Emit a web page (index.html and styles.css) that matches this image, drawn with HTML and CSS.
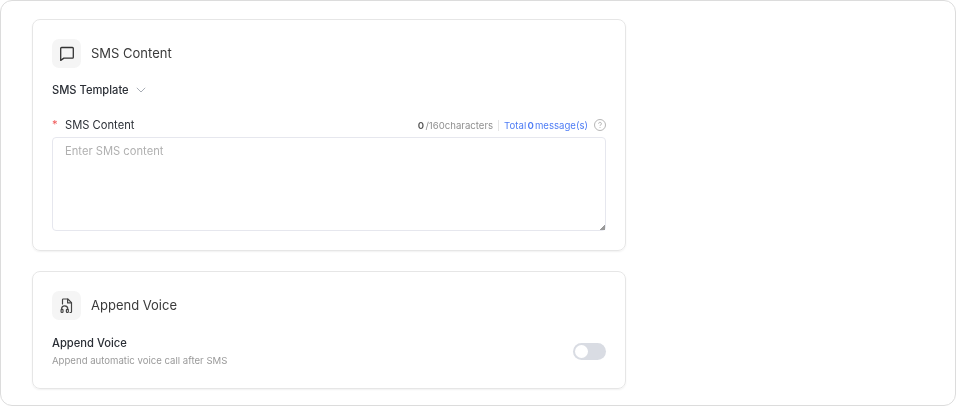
FILE: index.html
```html
<!DOCTYPE html>
<html lang="en">
<head>
<meta charset="utf-8">
<title>SMS Content</title>
<link rel="stylesheet" href="styles.css">
</head>
<body>
<main class="frame">
  <section class="card">
    <header class="card-head">
      <span class="icon-box">
        <svg width="16" height="16" viewBox="0 0 16 16" fill="none" stroke="#333" stroke-width="1.3" stroke-linejoin="round"><path d="M1.700 2.400a.9.9 0 0 1 .9-.9h10.800a.9.9 0 0 1 .9.9v8.800a.9.9 0 0 1-.9.9H4.900l-3.200 2.300z"/></svg>
      </span>
      <h2 class="card-title">SMS Content</h2>
    </header>
    <div class="template">
      <span>SMS Template</span>
      <svg width="10" height="6" viewBox="0 0 10 6" fill="none" stroke="#a8adb5" stroke-width="1"><path d="M.8.8 5 5l4.200-4.200"/></svg>
    </div>
    <div class="field-head">
      <label class="field-label"><span class="req">*</span>SMS Content</label>
      <div class="counter">
        <span class="count"><b>0</b> /160characters</span>
        <span class="sep"></span>
        <span class="total">Total <b>0</b> message(s)</span>
        <svg width="12" height="12" viewBox="0 0 12 12" fill="none" stroke="#a3a3a3" stroke-width=".8"><circle cx="6" cy="6" r="5.500"/><path d="M4.600 4.700a1.400 1.400 0 1 1 2.100 1.200c-.5.3-.7.6-.7 1.100"/><path d="M6 8.200v.8"/></svg>
      </div>
    </div>
    <textarea class="input" placeholder="Enter SMS content"></textarea>
  </section>
  <section class="card card-voice">
    <header class="card-head">
      <span class="icon-box">
        <svg width="16" height="16" viewBox="0 0 16 16" fill="none" stroke="#444" stroke-width="1.200" stroke-linejoin="round" stroke-linecap="round"><path d="M3.500 6V1.800a.8.8 0 0 1 .8-.8h4.500l3.700 3.700v9a.8.8 0 0 1-.8.8h-.7"/><path d="M8.600 1v3.900h3.900"/><path d="M2.600 11.500v-.5a3.100 3.100 0 0 1 6.200 0v.5"/><rect x="2.100" y="11.300" width="1.900" height="3.200" rx=".8"/><rect x="7.400" y="11.300" width="1.900" height="3.200" rx=".8"/></svg>
      </span>
      <h2 class="card-title">Append Voice</h2>
    </header>
    <div class="setting">
      <div>
        <div class="setting-name">Append Voice</div>
        <div class="setting-desc">Append automatic voice call after SMS</div>
      </div>
      <span class="switch"><span class="knob"></span></span>
    </div>
  </section>
</main>
</body>
</html>
```
FILE: styles.css
```css
* { box-sizing: border-box; }
html, body { margin: 0; background: #fff; }
body { font-family: Inter, "Noto Sans", sans-serif; color: #2b2f36; }
.frame {
  width: 956px; height: 406px;
  border: 1px solid #dcdcdc; border-radius: 12px;
  padding: 18px 0 0 31px;
  display: flex; flex-direction: column; gap: 20px;
  overflow: hidden;
  filter: blur(.3px);
}
.card {
  width: 594px;
  border: 1px solid #e6e6e6; border-radius: 8px;
  padding: 19px 19px 19px 19px;
  box-shadow: 0 1px 2px rgba(0,0,0,.06);
}
.card-voice { padding-bottom: 20px; }
.card-head { display: flex; align-items: center; gap: 10px; }
.icon-box {
  width: 29px; height: 29px; border-radius: 7px; background: #f5f5f5;
  display: flex; align-items: center; justify-content: center;
}
.card-title { margin: 0 0 1px; font-size: 13px; font-weight: 400; color: #3a3a3a; }
.template {
  display: flex; align-items: center; gap: 7px;
  margin-top: 14px; height: 16px;
  font-size: 11.150px; font-weight: 500; color: #2b2f36;
}
.field-head {
  display: flex; justify-content: space-between; align-items: center;
  margin-top: 19px; height: 16px;
}
.field-label { font-size: 11.200px; color: #2b2f36; }
.req { color: #f05a5a; display: inline-block; width: 13px; }
.counter { display: flex; align-items: center; font-size: 9.600px; color: #8f8f8f; word-spacing: -1.500px; }
.count b, .total b { font-weight: 600; }
.count b { color: #555; }
.sep { width: 1px; height: 11px; background: #e5e5e5; margin: 0 5px; }
.total { color: #4f7df5; margin-right: 6px; }
.input {
  display: block; width: 100%; height: 94px; margin-top: 4px;
  border: 1px solid #e6e7ee; border-radius: 4px;
  padding: 6px 12px;
  font: 11.200px/1.400 Inter, "Noto Sans", sans-serif;
  outline: none;
}
.input::-webkit-resizer {
  background: linear-gradient(135deg, transparent 80%, #999 80%);
}
.input::placeholder { color: #b0b0b0; }
.setting {
  display: flex; justify-content: space-between; align-items: center;
  margin-top: 15px;
}
.setting-name { font-size: 11.200px; font-weight: 500; line-height: 16px; }
.setting-desc { font-size: 9.600px; color: #9a9a9a; line-height: 14px; margin-top: 3px; }
.switch {
  width: 33px; height: 17px; border-radius: 9px; background: #d9dce3;
  padding: 2px; display: flex;
}
.knob { width: 13px; height: 13px; border-radius: 50%; background: #fff; }
```
